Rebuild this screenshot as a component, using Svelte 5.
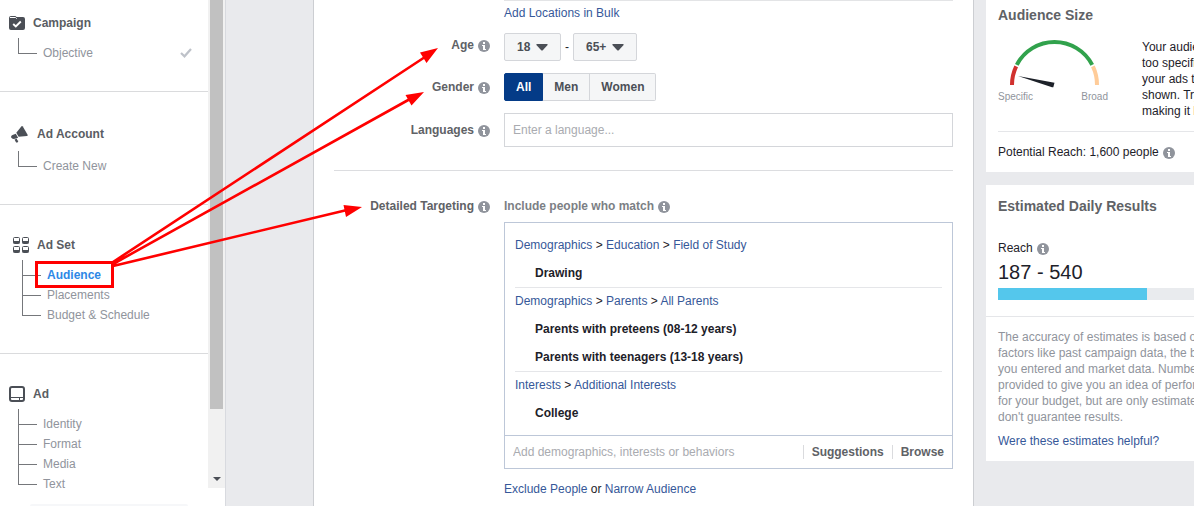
<script>
  const sections = [
    { name: 'Campaign', icon: 'folder', kind: 'first', items: ['Objective'], done: 'Objective' },
    { name: 'Ad Account', icon: 'horn', kind: 'account', items: ['Create New'] },
    { name: 'Ad Set', icon: 'grid', kind: 'set', items: ['Audience', 'Placements', 'Budget & Schedule'] },
    { name: 'Ad', icon: 'frame', kind: 'ad', items: ['Identity', 'Format', 'Media', 'Text'] }
  ];
  const current = 'Audience';

  const groups = [
    { path: ['Demographics', 'Education', 'Field of Study'], items: ['Drawing'] },
    {
      path: ['Demographics', 'Parents', 'All Parents'],
      items: ['Parents with preteens (08-12 years)', 'Parents with teenagers (13-18 years)']
    },
    { path: ['Interests', 'Additional Interests'], items: ['College'] }
  ];

  const genders = ['All', 'Men', 'Women'];
  let gender = $state('All');

  const sizeHint = ['Your audie', 'too specific', 'your ads to', 'shown. Try', 'making it b'];
  const accuracy = [
    'The accuracy of estimates is based on',
    'factors like past campaign data, the b',
    'you entered and market data. Number',
    'provided to give you an idea of perform',
    'for your budget, but are only estimates',
    "don't guarantee results."
  ];
</script>

{#snippet info()}
  <svg class="info" width="12" height="12" viewBox="0 0 12 12" aria-hidden="true">
    <circle cx="6" cy="6" r="6" fill="#90949c" />
    <path d="M5 2h2v2H5zM4 5h3v4h1v1H5V6H4z" fill="#fff" />
  </svg>
{/snippet}

{#snippet caret()}
  <svg class="caret" width="12" height="7" viewBox="0 0 12 7" aria-hidden="true">
    <path d="M1 0h10q1 0 .6 1L7 6q-1 1-2 0L.4 1Q0 0 1 0z" fill="#4b4f56" />
  </svg>
{/snippet}

{#snippet sectionIcon(name)}
  {#if name === 'folder'}
    <svg width="16" height="14" viewBox="0 0 16 14" aria-hidden="true">
      <path d="M0 2Q0 0 2 0h4q1 0 1.500 1H14q2 0 2 2v9q0 2-2 2H2q-2 0-2-2z" fill="#4b4f56" />
      <path d="M1 1.500h5.500l1.200 1.200" stroke="#fff" fill="none" />
      <path d="M4.200 8l2.600 2.500 5-5" stroke="#fff" stroke-width="1.900" fill="none" />
    </svg>
  {:else if name === 'horn'}
    <svg width="17" height="17" viewBox="0 0 17 17" aria-hidden="true">
      <path d="M10.500.3q.8-.5 1.300.3l4.800 8.200q.4.900-.6 1.100L7.600 10.800 5.300 6.800z" fill="#4b4f56" />
      <path d="M4.800 7.700l2.300 4-2 .9q-3 1.200-4.500-.5Q-.800 10 1.500 8.900zM3.500 13.500l2.300-.8.600 1.500 1 .7-.9 1.600H5.100z" fill="#4b4f56" />
    </svg>
  {:else if name === 'grid'}
    <svg width="16" height="16" viewBox="0 0 16 16" aria-hidden="true">
      {#each [[0, 0], [9, 0], [0, 9], [9, 9]] as [x, y]}
        <rect x={x + 0.5} y={y + 0.5} width="6" height="6" rx="1" fill="#fff" stroke="#4b4f56" />
        <path d="M{x + 0.5} {y + 4}h6v2.500h-6z" fill="#4b4f56" />
      {/each}
    </svg>
  {:else}
    <svg width="16" height="16" viewBox="0 0 16 16" aria-hidden="true">
      <rect x="1" y="1" width="14" height="14" rx="2" fill="#fff" stroke="#4b4f56" stroke-width="2" />
      <path d="M1 11.500h14M10.500 12v3" stroke="#4b4f56" fill="none" />
    </svg>
  {/if}
{/snippet}

<div class="page">
  <aside>
    <div class="scroller">
      <nav>
        {#each sections as section}
          <section class={section.kind}>
            <h2>{@render sectionIcon(section.icon)}{section.name}</h2>
            <ul>
              {#each section.items as item}
                <li>
                  <span class="branch"></span>
                  <a href="#top" class:current={item === current}>{item}</a>
                  {#if section.done === item}
                    <svg class="tick" width="12" height="10" viewBox="0 0 12 10" aria-hidden="true">
                      <path d="M1 5l3.500 3.300L11 1" stroke="#bec2c9" stroke-width="2.200" fill="none" />
                    </svg>
                  {/if}
                </li>
              {/each}
            </ul>
          </section>
        {/each}
      </nav>
      <div class="track">
        <div class="thumb"></div>
        <svg width="8" height="4" viewBox="0 0 8 4" aria-hidden="true"><path d="M0 0h8L4 4z" fill="#4b4f56" /></svg>
      </div>
    </div>
    <div class="footer"></div>
  </aside>

  <main>
    <div class="row">
      <div class="bulk"><a href="#top">Add Locations in Bulk</a></div>
    </div>
    <div class="row age">
      <label class="name" for="age-from">Age {@render info()}</label>
      <div class="ages">
        <span class="pick">
          <select id="age-from"><option>18</option></select>
          {@render caret()}
        </span>
        <span>-</span>
        <span class="pick">
          <select aria-label="Oldest age"><option>65+</option></select>
          {@render caret()}
        </span>
      </div>
    </div>
    <div class="row">
      <span class="name" id="gender">Gender {@render info()}</span>
      <div class="genders" role="group" aria-labelledby="gender">
        {#each genders as option}
          <button class:on={gender === option} aria-pressed={gender === option} onclick={() => (gender = option)}>{option}</button>
        {/each}
      </div>
    </div>
    <div class="row">
      <label class="name" for="languages">Languages {@render info()}</label>
      <input id="languages" class="languages" placeholder="Enter a language..." />
    </div>
    <hr />
    <div class="row targeting">
      <label class="name" for="targeting">Detailed Targeting {@render info()}</label>
      <div>
        <div class="include">Include people who match {@render info()}</div>
        <div class="box">
          <div class="groups">
            {#each groups as group}
              <div class="group">
                <p class="path">
                  {#each group.path as part, i}{#if i > 0}{' > '}{/if}<a href="#top">{part}</a>{/each}
                </p>
                {#each group.items as item}<p class="item">{item}</p>{/each}
              </div>
            {/each}
          </div>
          <div class="add">
            <input id="targeting" placeholder="Add demographics, interests or behaviors" />
            <button>Suggestions</button>
            <button>Browse</button>
          </div>
        </div>
        <p class="narrow"><a href="#top">Exclude People</a> or <a href="#top">Narrow Audience</a></p>
      </div>
    </div>
  </main>

  <div class="side">
    <div class="card size">
      <h3>Audience Size</h3>
      <div class="meter">
        <div class="gauge">
          <svg width="112" height="50" viewBox="0 0 112 50" aria-hidden="true">
            <g fill="none" stroke-width="4">
              <path d="M14 46a42.500 42.500 0 0 1 4.200-18.600" stroke="#d1312f" />
              <path d="M18.800 25.800a42.500 42.500 0 0 1 75.400 0" stroke="#31a24c" />
              <path d="M94.900 27.400A42.500 42.500 0 0 1 99 46" stroke="#ffcc99" />
            </g>
            <path d="M20 37l36.500 6.700-1.200 4.500q-1 .3-2-.2z" fill="#1d2129" />
          </svg>
          <div class="ends"><span>Specific</span><span>Broad</span></div>
        </div>
        <p>{#each sizeHint as line}<span class="line">{line}</span>{/each}</p>
      </div>
      <p class="potential">Potential Reach: 1,600 people {@render info()}</p>
    </div>
    <div class="card results">
      <h3>Estimated Daily Results</h3>
      <p class="reach">Reach {@render info()}</p>
      <p class="figure">187 - 540</p>
      <div class="bar"><div></div></div>
      <div class="notes">
        <p>{#each accuracy as line}<span class="line">{line}</span>{/each}</p>
        <a href="#top">Were these estimates helpful?</a>
      </div>
    </div>
  </div>

  <svg class="arrows" width="460" height="300" viewBox="0 0 460 300" aria-hidden="true">
    <rect x="36.500" y="262.500" width="76" height="24" fill="none" stroke="#f00" stroke-width="3" />
    <path d="M113 262L425 57M113 264L410 99M113 266L347 210" stroke="#f00" stroke-width="2.600" />
    <path d="M438 48l-11.500 15-6.500-10.500zM424 92l-12.500 13.500-6-10.500zM362 207l-16 10-2.500-12z" fill="#f00" />
  </svg>
</div>

<style>
  :global(body) {
    margin: 0;
    overflow: hidden;
    background: #e9eaed;
  }
  * {
    box-sizing: border-box;
  }
  .page {
    position: relative;
    display: flex;
    height: 100vh;
    overflow: hidden;
    font: 12px/16px 'Liberation Sans', Arial, sans-serif;
    color: #1d2129;
  }
  h2, h3, p, ul {
    margin: 0;
    padding: 0;
  }
  a {
    color: #365899;
    text-decoration: none;
  }
  input, select, button {
    margin: 0;
    font: inherit;
    color: inherit;
  }
  svg {
    flex: none;
  }

  aside {
    display: flex;
    flex-direction: column;
    flex: none;
    width: 226px;
    background: #fff;
    border-right: 1px solid #d8dadf;
  }
  .scroller {
    display: flex;
    flex: 1;
    min-height: 0;
  }
  nav {
    flex: 1;
    overflow: hidden;
  }
  section {
    padding-bottom: 28px;
    border-bottom: 1px solid #dadbdd;
  }
  h2 {
    display: flex;
    align-items: center;
    gap: 8px;
    height: 20px;
    font-size: 12px;
    color: #5a5d63;
  }
  ul {
    margin: 10px 20px 0 18px;
    list-style: none;
  }
  .first { padding-top: 13px; }
  .account { padding-top: 32px; }
  .set, .ad { padding-top: 30px; }
  .first h2, .ad h2 { padding-left: 9px; }
  .account h2 {
    padding-left: 11px;
    gap: 9px;
  }
  .account ul { margin-top: 12px; }
  .set h2 { padding-left: 13px; }
  .set ul { margin-left: 22px; }
  li {
    display: flex;
    align-items: center;
    gap: 6px;
    height: 20px;
  }
  li a {
    flex: 1;
    color: #90949c;
  }
  li a.current {
    font-weight: bold;
    color: #2d88e6;
  }
  .branch {
    align-self: flex-start;
    width: 19px;
    height: 16px;
    margin-top: -5px;
    border: solid #75777b;
    border-width: 0 0 1px 1px;
  }
  li + li .branch {
    height: 20px;
    margin-top: -9px;
  }
  .ad li:last-child .branch {
    border-left-color: #75777b;
  }
  .tick {
    margin-right: -4px;
  }
  .track {
    display: flex;
    flex-direction: column;
    justify-content: space-between;
    align-items: center;
    width: 17px;
    padding-bottom: 7px;
    background: #f1f1f1;
  }
  .thumb {
    width: 13px;
    height: 85%;
    background: #c1c1c1;
  }
  .footer {
    height: 2px;
    margin: 16px 37px 0 30px;
    border-radius: 2px 2px 0 0;
    background: #f6f7f9;
  }

  main {
    flex: 1;
    min-width: 0;
    margin-left: 87px;
    padding: 0 20px;
    background: #fff;
    border: solid #ccced2;
    border-width: 0 1px;
  }
  .row {
    display: grid;
    grid-template-columns: 156px minmax(0, 1fr);
    column-gap: 14px;
    align-items: center;
    margin-bottom: 12px;
  }
  .name, .include {
    display: flex;
    align-items: center;
    gap: 4px;
    font-weight: bold;
    color: #606266;
  }
  .name {
    justify-content: flex-end;
  }
  .age .name {
    padding-bottom: 4px;
  }
  .include {
    color: #7c7f85;
  }
  .name .info, .include .info {
    margin-top: 2px;
  }
  .bulk {
    grid-column: 2;
    padding: 4px 0 0;
    border-top: 1px solid #e3e4e6;
  }
  .ages {
    display: flex;
    align-items: center;
    gap: 4px;
  }
  .pick {
    display: grid;
    align-items: center;
  }
  .pick > :global(*) {
    grid-area: 1 / 1;
  }
  .caret {
    justify-self: end;
    margin-right: 13px;
    pointer-events: none;
  }
  select {
    appearance: none;
    height: 28px;
    padding: 0 29px 0 12px;
    border: 1px solid #d4d6da;
    border-radius: 2px;
    background: #f5f6f7;
    font-weight: bold;
    color: #4b4f56;
  }
  .genders {
    display: flex;
  }
  .genders button {
    height: 28px;
    padding: 0 11px;
    border: 1px solid #d4d6da;
    border-left-width: 0;
    background: #f5f6f7;
    font-weight: bold;
    color: #4b4f56;
  }
  .genders button:first-child {
    border-left-width: 1px;
    border-radius: 2px 0 0 2px;
  }
  .genders button:last-child {
    border-radius: 0 2px 2px 0;
  }
  .genders .on {
    background: #043b87;
    border-color: #043b87;
    color: #fff;
  }
  .languages {
    height: 34px;
    padding: 0 8px;
    border: 1px solid #d4d6da;
    background: #fff;
  }
  input::placeholder {
    color: #a9abb0;
  }
  hr {
    height: 1px;
    margin: 23px 0 27px;
    border: 0;
    background: #dcdde0;
  }
  .targeting {
    align-items: start;
  }
  .box {
    margin-top: 8px;
    border: 1px solid #bdc7d8;
  }
  .groups {
    padding: 10px 10px 8px;
  }
  .group {
    border-bottom: 1px solid #e5e6e9;
  }
  .group + .group {
    padding-top: 1px;
  }
  .group:last-child {
    border: 0;
  }
  .path {
    margin-bottom: 2px;
    line-height: 24px;
  }
  .item {
    padding-left: 20px;
    line-height: 28px;
    font-weight: bold;
  }
  .add {
    display: flex;
    align-items: center;
    height: 33px;
    border-top: 1px solid #bdc7d8;
  }
  .add input {
    flex: 1;
    min-width: 0;
    padding: 0 8px;
    border: 0;
    background: none;
  }
  .add button {
    height: 14px;
    padding: 0 8px;
    border: 0;
    border-left: 1px solid #dadbde;
    background: none;
    line-height: 12px;
    font-weight: bold;
    color: #606266;
  }
  .narrow {
    margin-top: 12px;
  }

  .side {
    flex: none;
    width: 208px;
    margin-left: 12px;
    overflow: hidden;
  }
  .card {
    padding-left: 12px;
    background: #fff;
    white-space: nowrap;
  }
  h3 {
    font-size: 14px;
    line-height: 16px;
    color: #606266;
  }
  .line {
    display: block;
  }
  .size {
    padding-top: 7px;
  }
  .meter {
    display: flex;
    gap: 32px;
    padding: 16px 0 12px;
    border-bottom: 1px solid #e5e6e9;
  }
  .gauge {
    flex: none;
    width: 112px;
  }
  .gauge svg {
    display: block;
  }
  .ends {
    display: flex;
    justify-content: space-between;
    padding-right: 2px;
    font-size: 10px;
    color: #90949c;
  }
  .potential, .reach {
    display: flex;
    align-items: center;
    gap: 4px;
  }
  .potential {
    padding: 12px 0;
  }
  .potential .info, .reach .info {
    margin-top: 2px;
  }
  .results {
    margin-top: 13px;
    padding-top: 13px;
  }
  .reach {
    margin-top: 26px;
  }
  .figure {
    margin: 4px 0;
    font-size: 20px;
    line-height: 24px;
  }
  .bar {
    background: #e9ebee;
  }
  .bar div {
    width: 76%;
    height: 12px;
    background: #54c7ec;
  }
  .notes {
    margin: 16px 0 0 -12px;
    padding: 12px;
    border-top: 1px solid #e5e6e9;
    color: #90949c;
  }
  .notes p {
    margin-bottom: 8px;
  }
  .arrows {
    position: absolute;
    left: 0;
    top: 0;
    pointer-events: none;
  }
</style>
